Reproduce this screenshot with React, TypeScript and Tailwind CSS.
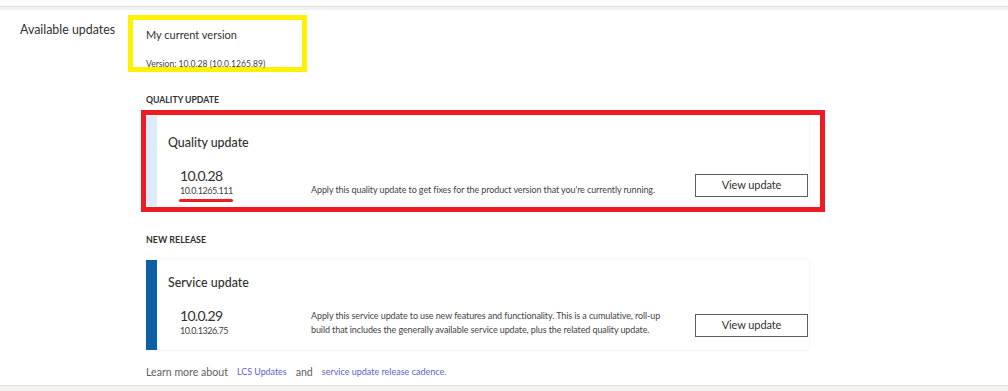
export default function App() {
  return (
    <div
      className="w-full h-[391px] bg-white flex flex-col text-[#323130] overflow-hidden"
      style={{ fontFamily: "Lato, 'Noto Sans', sans-serif" }}
    >
      <div className="h-[6px] bg-[#fdfdfd]" />
      <div className="h-[4px] bg-[#f3f2f1] border-t border-[#e1dfdd]" />

      <div className="flex-1 flex">
        <div className="w-[128px] pl-[20px] pt-[11px] text-[12.4px] leading-[18px]">Available updates</div>

        <div className="flex-1 flex flex-col pt-[5px]">
          <div className="w-[179px] h-[57px] border-[5px] border-[#fff200] pl-[13px] pt-[7px] flex flex-col">
            <span className="text-[11px] leading-[16px]">My current version</span>
            <span className="mt-auto mb-[-3px] text-[8.6px] leading-[12px] text-[#444]">Version: 10.0.28 (10.0.1265.89)</span>
          </div>

          <div className="ml-[18px] w-[663px] flex flex-col">
            <h3 className="mt-[22px] text-[8.7px] font-bold leading-[12px] uppercase">Quality update</h3>

            <div className="relative mt-[10px]">
              <UpdateCard
                stripe="bg-[#deecf9]"
                title="Quality update"
                version="10.0.28"
                build="10.0.1265.111"
                underline
                titleTop="pt-[18px]"
                lines={["Apply this quality update to get fixes for the product version that you're currently running."]}
                bottom="pb-[9px]"
              />
              <div className="absolute -left-[5px] -right-[16px] -top-[6px] -bottom-[6px] border-[5px] border-[#ed1c24] pointer-events-none" />
            </div>

            <h3 className="mt-[28px] text-[8.9px] font-bold leading-[12px] uppercase">New release</h3>

            <div className="mt-[14px]">
              <UpdateCard
                stripe="bg-[#0f5fa6]"
                title="Service update"
                version="10.0.29"
                build="10.0.1326.75"
                titleTop="pt-[14px]"
                lines={[
                  "Apply this service update to use new features and functionality. This is a cumulative, roll-up",
                  "build that includes the generally available service update, plus the related quality update.",
                ]}
                bottom="pb-[13px]"
              />
            </div>

            <div className="mt-[15px] flex items-baseline text-[10.6px] text-[#605e5c]">
              <span>Learn more about</span>
              <a className="ml-[9px] -translate-y-[1px] text-[8.9px] text-[#5a5fd6]">LCS Updates</a>
              <span className="ml-[9px]">and</span>
              <a className="ml-[9px] -translate-y-[1px] text-[9px] text-[#5a5fd6]">service update release cadence.</a>
            </div>
          </div>
        </div>
      </div>

      <div className="h-[6px] bg-[#f3f2f1] border-t border-[#e1dfdd]" />
    </div>
  );
}

function UpdateCard(props: {
  stripe: string;
  title: string;
  version: string;
  build: string;
  underline?: boolean;
  titleTop: string;
  bottom: string;
  lines: string[];
}) {
  return (
    <div className="h-[90px] flex bg-white rounded-[2px] shadow-[0_0_2px_rgba(0,0,0,0.12)]">
      <div className={`w-[11px] ${props.stripe}`} />
      <div className={`flex-1 flex flex-col pl-[11px] pr-[1px] ${props.titleTop} ${props.bottom}`}>
        <div className="text-[12.4px] leading-[18px] font-medium">{props.title}</div>
        <div className="mt-auto flex items-end">
          <div className="relative w-[143px] pl-[12px] flex flex-col">
            <span className="text-[14px] leading-[18px] tracking-[-0.7px]">{props.version}</span>
            <span className="text-[9px] leading-[12px] tracking-[-0.45px] text-[#444]">{props.build}</span>
            {props.underline && (
              <span className="absolute left-[11px] top-[32px] w-[54px] h-[3px] rounded-full bg-[#ed1c24]" />
            )}
          </div>
          <div className="flex-1 flex flex-col text-[9px] leading-[14px] tracking-[-0.1px] text-[#444]">
            {props.lines.map((l) => (
              <span key={l}>{l}</span>
            ))}
          </div>
          <button className="w-[113px] h-[23px] border border-[#605e5c] bg-white text-[11px] tracking-[-0.1px] text-[#323130]">
            View update
          </button>
        </div>
      </div>
    </div>
  );
}
